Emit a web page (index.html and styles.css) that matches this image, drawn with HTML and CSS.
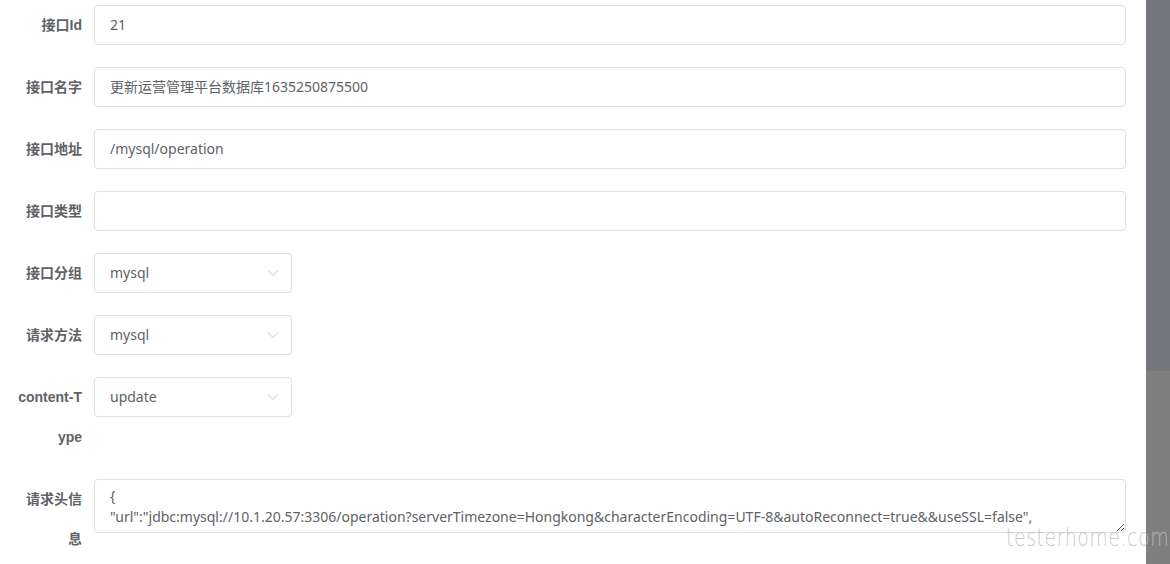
FILE: index.html
```html
<!DOCTYPE html>
<html lang="zh">
<head>
<meta charset="utf-8">
<title>接口编辑</title>
<link rel="stylesheet" href="styles.css">
</head>
<body>
<div class="page">
  <form class="form">
    <div class="item">
      <label class="label">接口Id</label>
      <div class="control"><div class="input">21</div></div>
    </div>
    <div class="item">
      <label class="label">接口名字</label>
      <div class="control"><div class="input">更新运营管理平台数据库1635250875500</div></div>
    </div>
    <div class="item">
      <label class="label">接口地址</label>
      <div class="control"><div class="input">/mysql/operation</div></div>
    </div>
    <div class="item">
      <label class="label">接口类型</label>
      <div class="control"><div class="input"></div></div>
    </div>
    <div class="item">
      <label class="label">接口分组</label>
      <div class="control"><div class="select"><span>mysql</span><svg class="arrow" width="12" height="8" viewBox="0 0 12 8"><polyline points="1,1.5 6,6.5 11,1.5" fill="none" stroke="#c0c4cc" stroke-width="1"/></svg></div></div>
    </div>
    <div class="item">
      <label class="label">请求方法</label>
      <div class="control"><div class="select"><span>mysql</span><svg class="arrow" width="12" height="8" viewBox="0 0 12 8"><polyline points="1,1.5 6,6.5 11,1.5" fill="none" stroke="#c0c4cc" stroke-width="1"/></svg></div></div>
    </div>
    <div class="item">
      <label class="label">content-Type</label>
      <div class="control"><div class="select"><span>update</span><svg class="arrow" width="12" height="8" viewBox="0 0 12 8"><polyline points="1,1.5 6,6.5 11,1.5" fill="none" stroke="#c0c4cc" stroke-width="1"/></svg></div></div>
    </div>
    <div class="item">
      <label class="label">请求头信息</label>
      <div class="control"><textarea class="textarea" rows="2">{
"url":"jdbc:mysql://10.1.20.57:3306/operation?serverTimezone=Hongkong&amp;characterEncoding=UTF-8&amp;autoReconnect=true&amp;&amp;useSSL=false",</textarea></div>
    </div>
  </form>
  <aside class="side">
    <div class="side-top"></div>
    <div class="side-bottom"></div>
  </aside>
  <div class="watermark">testerhome.com</div>
</div>
</body>
</html>
```

FILE: styles.css
```css
html, body {
  margin: 0;
  padding: 0;
  background: #fff;
}
.page {
  position: relative;
  display: flex;
  width: 1170px;
  height: 564px;
  overflow: hidden;
  font-family: "Liberation Sans", "Noto Sans CJK SC", sans-serif;
  font-size: 14px;
  color: #606266;
}
.form {
  flex: 1;
  padding: 5px 20px 0 14px;
  margin: 0;
}
.item {
  display: flex;
  margin-bottom: 22px;
}
.label {
  flex: 0 0 80px;
  box-sizing: border-box;
  padding-right: 12px;
  text-align: right;
  line-height: 40px;
  font-weight: bold;
  color: #606266;
  word-break: break-all;
}
.control {
  flex: 1;
}
.input,
.select,
.textarea {
  font-family: "Noto Sans", "Noto Sans CJK SC", sans-serif;
  font-size: 14px;
  color: #606266;
}
.input {
  box-sizing: border-box;
  height: 40px;
  line-height: 37px;
  border: 1px solid #dcdfe6;
  border-radius: 4px;
  padding: 0 15px;
}
.select {
  box-sizing: border-box;
  width: 198px;
  height: 40px;
  border: 1px solid #dcdfe6;
  border-radius: 4px;
  padding: 0 15px 1px;
  display: flex;
  align-items: center;
  justify-content: space-between;
}
.arrow {
  margin-right: -3px;
}
.textarea {
  display: block;
  box-sizing: border-box;
  width: 100%;
  height: 54px;
  padding: 5px 15px;
  border: 1px solid #dcdfe6;
  border-radius: 4px;
  line-height: 21px;
  resize: vertical;
  overflow: hidden;
  white-space: pre;
  margin: 0;
}
.side {
  flex: 0 0 24px;
  display: flex;
  flex-direction: column;
}
.side-top {
  height: 371px;
  background: #73777c;
}
.side-bottom {
  flex: 1;
  background: #7f7f7f;
}
.watermark {
  position: absolute;
  left: 1006px;
  top: 529px;
  font-family: "DejaVu Sans", sans-serif;
  font-weight: 200;
  font-size: 19px;
  line-height: 22px;
  letter-spacing: 0.5px;
  color: rgba(190, 190, 190, 0.85);
  transform: scaleY(1.3);
  transform-origin: left bottom;
}
```
